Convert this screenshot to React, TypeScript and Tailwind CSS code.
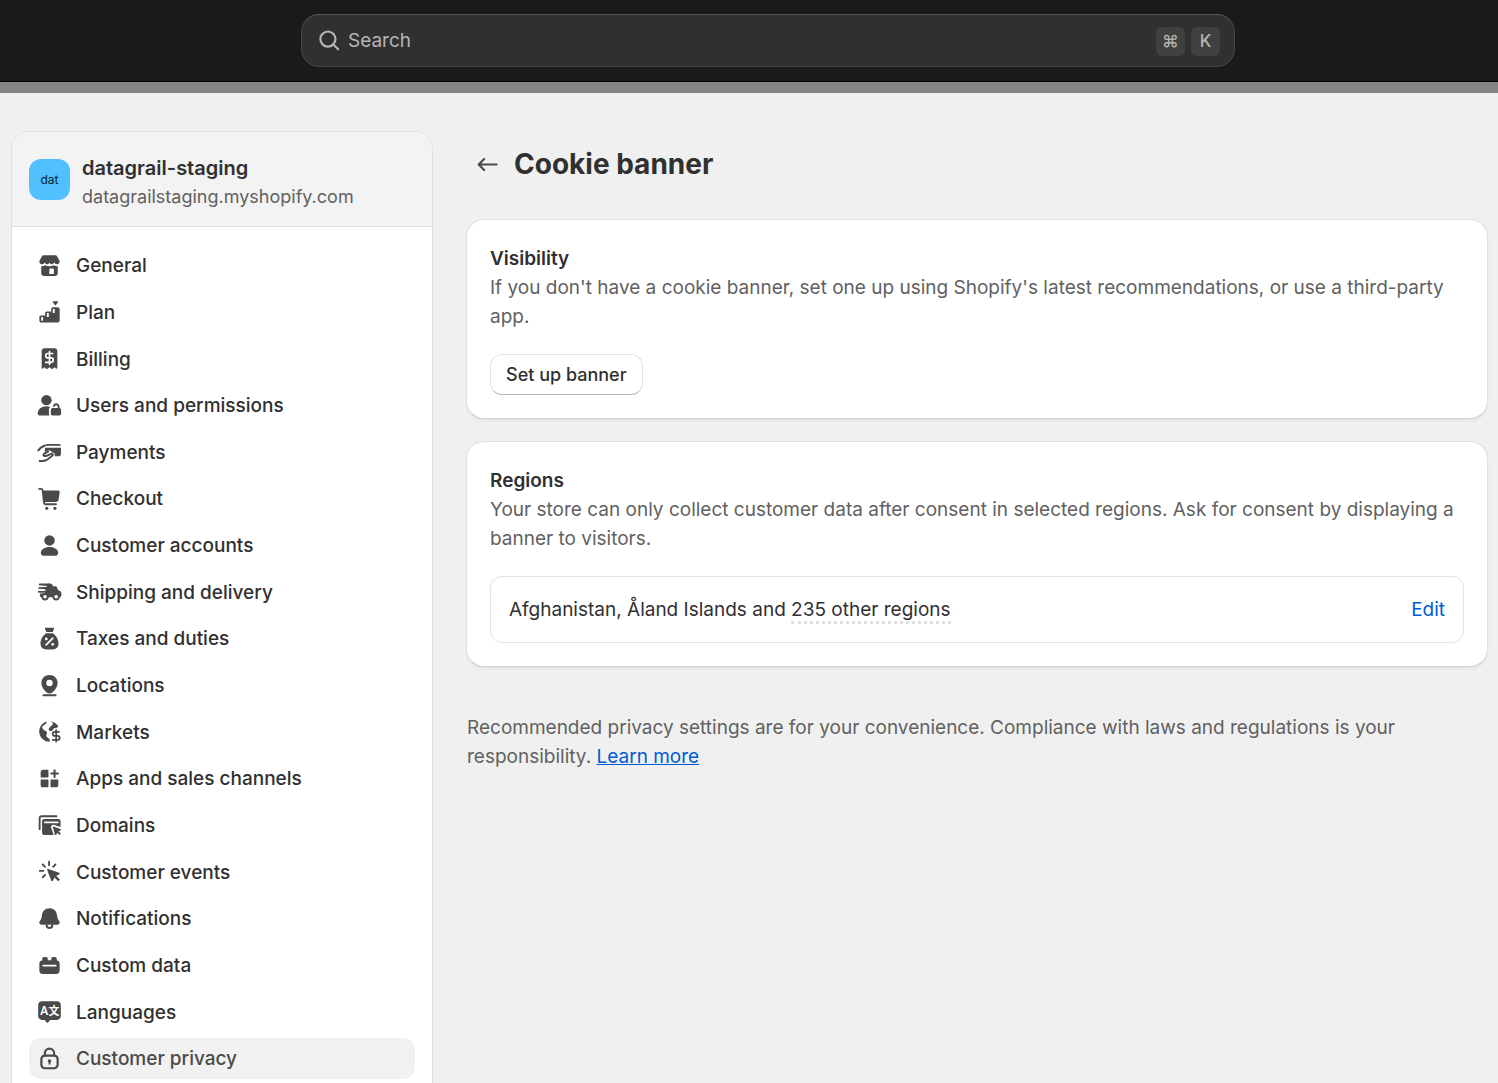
import type { ReactNode } from 'react';
import { DollarSign } from 'lucide-react';

interface NavItem {
  label: string;
  icon: ReactNode;
  active?: boolean;
}

const line = {
  fill: 'none',
  stroke: 'currentColor',
  strokeWidth: 1.5,
  strokeLinecap: 'round' as const,
  strokeLinejoin: 'round' as const,
};

function Icon({ children }: { children: ReactNode }) {
  return (
    <svg viewBox="0 0 20 20" className="size-[29px] shrink-0 text-[#4a4a4a]" fill="currentColor" aria-hidden="true">
      {children}
    </svg>
  );
}

const items: NavItem[] = [
  {
    label: 'General',
    icon: (
      <>
        <path d="M6.200 3h7.600c.7 0 1.300.3 1.600.9l1.400 2.600c.2.300.2.600.2.900 0 1-.8 1.700-1.800 1.700-.8 0-1.500-.4-2-1.200-.4.800-1 1.200-1.700 1.200s-1.200-.4-1.500-1.200c-.3.800-.9 1.200-1.600 1.200s-1.200-.4-1.600-1.200C6.300 8.700 5.600 9.100 4.800 9.100 3.800 9.100 3 8.400 3 7.400c0-.3 0-.6.2-.9l1.400-2.600C4.900 3.300 5.500 3 6.200 3z" />
        <path
          fillRule="evenodd"
          d="M4.300 10.500c1 .1 1.800-.1 2.600-.6 1.800.9 4.400.9 6.200 0 .8.500 1.600.7 2.600.6v4.900c0 1.100-.8 1.900-1.800 1.900H6.100c-1 0-1.800-.8-1.800-1.900zM10.700 12c-.5 0-.8.3-.8.8v3h3.100v-3c0-.5-.3-.8-.8-.8z"
        />
      </>
    ),
  },
  {
    label: 'Plan',
    icon: (
      <path
        fillRule="evenodd"
        d="M12.700 2.300h2.700c.4 0 .6.400.4.700l-1.300 1.800c-.2.300-.6.300-.8 0L12.300 3c-.2-.3 0-.7.400-.7zM11.200 7.500c0-.7.500-1.200 1.200-1.200h3.200c.8 0 1.400.6 1.400 1.400v7.800c0 .8-.6 1.400-1.400 1.400H4.400c-.8 0-1.400-.6-1.400-1.400v-2.300c0-.7.500-1.200 1.200-1.200H7v-1.500c0-.7.500-1.200 1.200-1.200h3zM12.300 7.500v2.900h1.300V7.500zM8.200 10.400v2.700h1.300v-2.700zM4.300 13.100v2.600h1.300v-2.600z"
      />
    ),
  },
  {
    label: 'Billing',
    icon: (
      <>
        <path d="M6.500 3h7c1.100 0 1.900.8 1.900 1.900v11.500c0 .6-.5.8-.9.500l-1-.9-1.200 1.100c-.3.300-.6.300-.9 0L10 16l-1.400 1.100c-.3.300-.6.300-.9 0L6.500 16l-1 .9c-.4.300-.9.100-.9-.5V4.900C4.600 3.800 5.400 3 6.500 3z" />
        <DollarSign x={4.8} y={4.4} width={10.4} height={10.4} stroke="white" strokeWidth={2.7} />
      </>
    ),
  },
  {
    label: 'Users and permissions',
    icon: (
      <>
        <circle cx="7.900" cy="6.300" r="3.600" />
        <path d="M1.900 15.500c0-2.800 2.600-4.900 6-4.900.9 0 1.800.2 2.600.5-.6.400-.9 1-.9 1.800v2.500c0 .6.100 1.100.4 1.500H3.500c-1 0-1.600-.5-1.600-1.400z" />
        <path d="M16.300 12v-1.300a1.700 1.700 0 0 0-3.300-.4" {...line} strokeWidth={1.300} />
        <rect x="10.900" y="11.800" width="7.100" height="5.100" rx="1.300" />
      </>
    ),
  },
  {
    label: 'Payments',
    icon: (
      <>
        <path d="M2.300 8.600C3.500 7 5 5.900 6.800 5.200" {...line} strokeWidth={1.400} />
        <path d="M3.200 15.900h2.300c3 0 4.300-2.200 6.400-3.700 1-.7.200-1.500-.8-1.200-1.700.6-2.800 1.700-4.600 1.400-1.600-.3-.4-2.100 2.500-2.900" {...line} strokeWidth={1.300} />
        <path d="M8.300 4.200h8.200c.8 0 1.400.5 1.400 1.200H6.900c.1-.7.700-1.200 1.400-1.200zM6.900 6.800h11v4.300c0 .8-.6 1.400-1.400 1.400h-2.900c.5-1.500-.7-2.700-2.200-2.400.2-.9-.5-1.500-1.500-1.500-1.200 0-2.300.5-3.200 1.100z" />
      </>
    ),
  },
  {
    label: 'Checkout',
    icon: (
      <>
        <path d="M2.900 3.400h1.200c.7 0 1.100.4 1.200 1.100l.9 8.300c.1.800.6 1.200 1.300 1.200h7" {...line} strokeWidth={1.300} />
        <path d="M5 4.500h11c.7 0 1.100.5 1 1.200l-.7 5c-.1 1-.9 1.700-1.900 1.700H6z" />
        <circle cx="8.100" cy="16.800" r="1.100" />
        <circle cx="13.700" cy="16.800" r="1.100" />
      </>
    ),
  },
  {
    label: 'Customer accounts',
    icon: (
      <>
        <circle cx="10" cy="6.500" r="3.600" />
        <path d="M4 15.200c0-2.400 2.700-4.100 6-4.100s6 1.700 6 4.100c0 1-.7 1.800-1.800 1.800H5.800c-1.100 0-1.800-.8-1.800-1.800z" />
      </>
    ),
  },
  {
    label: 'Shipping and delivery',
    icon: (
      <>
        <path d="M3.300 5.200h7M3 7.700h4M2.700 10.200h3.500" {...line} strokeWidth={1.300} />
        <path d="M8.400 4.600h2.300c.9 0 1.600.7 1.600 1.600v.2h1.500c.7 0 1.200.3 1.400.9l.8 1.800 1 .4c.8.300 1.200.9 1.200 1.700v1.200c0 .9-.7 1.600-1.600 1.600H4.900c-.9 0-1.600-.6-1.600-1.500V12c0-.4.200-.6.600-.6h2.700z" />
        <path d="M5 5.200h6v6H7z" />
        <path d="M3.500 6.450h4.500M3.300 8.950h4" stroke="white" strokeWidth=".9" />
        <circle cx="6.900" cy="13.600" r="1.900" fill="white" stroke="currentColor" strokeWidth="1.300" />
        <circle cx="14.600" cy="13.600" r="1.900" fill="white" stroke="currentColor" strokeWidth="1.300" />
      </>
    ),
  },
  {
    label: 'Taxes and duties',
    icon: (
      <>
        <path d="M7.500 2.500h5c.5 0 .8.400.6.900l-.9 2.100H7.800l-.9-2.100c-.2-.5.1-.9.6-.9zM7.800 6.400h4.400c2.300 1.400 4 4.300 4 7 0 2.500-1.600 4.100-4.100 4.100H7.900c-2.500 0-4.100-1.600-4.100-4.100 0-2.700 1.700-5.600 4-7z" />
        <path d="M12.300 9.800l-4.600 4.600" {...line} stroke="white" strokeWidth={1.200} />
        <circle cx="7.800" cy="10.300" r=".95" fill="white" />
        <circle cx="12.200" cy="14" r=".95" fill="white" />
      </>
    ),
  },
  {
    label: 'Locations',
    icon: (
      <>
        <path
          fillRule="evenodd"
          d="M10 2.700c3.200 0 5.600 2.300 5.600 5.400 0 3.100-2 5.200-3.700 6.800-1 .9-2.800.9-3.800 0-1.700-1.600-3.700-3.700-3.700-6.800 0-3.100 2.400-5.400 5.600-5.400zM10 6a2.200 2.200 0 1 0 0 4.400A2.200 2.200 0 0 0 10 6z"
        />
        <path d="M5.800 16.700h8.400" {...line} strokeWidth={1.300} />
      </>
    ),
  },
  {
    label: 'Markets',
    icon: (
      <>
        <path d="M10 2.900c2.600 0 4.900 1.500 6.100 3.600l-1.600 1.300c-.8-.3-1.500-.1-1.900.6-.5.900-1.100 1.400-2.100 1.200-1.100-.2-1.500-1.300-.7-2.100.9-.9 2.100-1.500 2.500-2.600.2-.7-.6-1.500-2.300-2zM8.400 3.100C5.200 3.800 2.900 6.600 2.900 10c0 3.900 3.200 7.100 7.100 7.100.5-.9.200-1.700-.4-2.300-.9-.9-2-.9-1.800-2.200.2-1.100.9-1.600.2-2.500C7.300 9.200 6.400 9.500 5.800 8.600 5.300 7.800 5 7.400 4.700 7.200 5.600 5.600 7.500 5.200 8.400 3.100z" />
        <DollarSign x={9.8} y={8.2} width={9.6} height={9.6} strokeWidth={3.1} />
      </>
    ),
  },
  {
    label: 'Apps and sales channels',
    icon: (
      <>
        <path d="M5.600 3.900h3c.4 0 .7.300.7.700v4c0 .4-.3.700-.7.700h-4c-.4 0-.7-.3-.7-.7v-3c0-1 .7-1.700 1.700-1.700zM4.600 10.700h4c.4 0 .7.300.7.700v4c0 .4-.3.700-.7.700h-3c-1 0-1.700-.7-1.700-1.700v-3c0-.4.3-.7.7-.7zM11.400 10.700h4c.4 0 .7.300.7.700v3c0 1-.7 1.700-1.700 1.700h-3c-.4 0-.7-.3-.7-.7v-4c0-.4.300-.7.7-.7z" />
        <path d="M13.500 4.300v4.600M11.200 6.600h4.600" {...line} strokeWidth={1.400} />
      </>
    ),
  },
  {
    label: 'Domains',
    icon: (
      <>
        <path d="M3.200 12.500V4.900c0-.8.500-1.300 1.300-1.300h10.300" {...line} strokeWidth={1.300} />
        <path
          fillRule="evenodd"
          d="M6.300 5.600h9.900c.8 0 1.400.6 1.400 1.400v4.100l-4.200-1.500c-1.500-.5-2.800.7-2.200 2.200l1.700 4.700H6.300c-.8 0-1.400-.6-1.400-1.400V7c0-.8.600-1.400 1.400-1.400zM6.300 7.200v1.300h9.900V7.200z"
        />
        <path d="M12.400 11.500c-.2-.5.200-.9.700-.7l4.400 1.600c.5.200.5.800.1 1l-1.300.6 1.500 1.500-1 1-1.500-1.500-.6 1.300c-.2.400-.8.400-1-.1z" />
      </>
    ),
  },
  {
    label: 'Customer events',
    icon: (
      <>
        <path d="M8.400 9c-.2-.5.300-1 .8-.8l7.400 2.600c.6.200.6 1 0 1.300l-2 .9 2.600 2.600-1.200 1.200-2.600-2.600-.9 2c-.3.600-1.100.6-1.300 0z" />
        <path d="M9.700 3.300v2.400M5.300 5.200l1.600 1.600M14.100 5.200l-1.600 1.600M3.300 9.600h2.500M5.300 14l1.600-1.600" {...line} strokeWidth={1.300} />
      </>
    ),
  },
  {
    label: 'Notifications',
    icon: (
      <>
        <path d="M10 2.900c3 0 5 2.100 5.200 4.900.2 2 .7 2.900 1.500 4 .8 1.300.2 2.500-1.200 2.500h-11c-1.400 0-2-1.200-1.200-2.500.8-1.100 1.300-2 1.500-4C5 5 7 2.900 10 2.900z" />
        <path d="M8.100 14.700a1.900 1.900 0 0 0 3.800 0" {...line} strokeWidth={1.400} />
      </>
    ),
  },
  {
    label: 'Custom data',
    icon: (
      <path
        fillRule="evenodd"
        d="M5 5.500c0-.8.500-1.300 1.300-1.300h1.200c.8 0 1.300.5 1.300 1.300v.8h2.400v-.8c0-.8.500-1.300 1.300-1.300h1.200c.8 0 1.300.5 1.300 1.300v.9c1.200.2 2 1.100 2 2.300v4.700c0 1.500-.9 2.400-2.400 2.400H5.400C3.900 15.800 3 14.900 3 13.400V8.700c0-1.200.8-2.100 2-2.300zM5.700 9.400a.65.65 0 0 0 0 1.300h8.600a.65.65 0 0 0 0-1.300z"
      />
    ),
  },
  {
    label: 'Languages',
    icon: (
      <>
        <path d="M4.900 2.900h10.200c1.600 0 2.700 1.100 2.700 2.700v7.500c0 1.600-1.100 2.700-2.700 2.700h-4.700l-1.200 1.600c-.4.500-1 .5-1.300 0l-1.100-1.600H4.900c-1.600 0-2.700-1.100-2.700-2.700V5.600c0-1.600 1.100-2.700 2.700-2.700z" />
        <text x="3.500" y="12.300" fill="white" fontSize="8" fontWeight="600" fontFamily="Inter, sans-serif">A</text>
        <text x="9.300" y="12.400" fill="white" fontSize="7.500" fontWeight="700" fontFamily="'Noto Sans CJK SC', sans-serif">文</text>
      </>
    ),
  },
  {
    label: 'Customer privacy',
    active: true,
    icon: (
      <>
        <rect x="4.400" y="8" width="11.200" height="8.700" rx="2.400" {...line} />
        <path d="M6.800 7.800V6.400a3.200 3.200 0 0 1 6.400 0v1.400" {...line} />
        <circle cx="10" cy="11.700" r="1.200" />
        <path d="M10 12v1.700" {...line} strokeWidth={1.200} />
      </>
    ),
  },
];

function TopBar() {
  return (
    <header className="flex justify-center border-b border-black bg-[#1a1a1a] py-3.5 pr-6 pl-[62px]">
      <label className="flex h-[53px] w-full max-w-[934px] items-center rounded-[18px] border border-[#444] border-t-[#555] bg-[#303030] pr-3.5 pl-[13px] text-[#b5b5b5]">
        <svg viewBox="0 0 20 20" className="size-[29px] shrink-0" {...line} aria-hidden="true">
          <circle cx="8.900" cy="9" r="5.200" />
          <path d="M12.800 12.900l3.200 3.200" />
        </svg>
        <input
          type="search"
          aria-label="Search"
          placeholder="Search"
          className="ml-1 min-w-0 flex-1 bg-transparent pt-0.5 text-[19px] outline-none placeholder:text-[#b5b5b5]"
        />
        <span className="flex gap-1.5 pt-0.5">
          <kbd className="grid size-[29px] place-items-center rounded-md bg-[#404040] font-[Inter,sans-serif] text-[17px] font-medium">⌘</kbd>
          <kbd className="grid size-[29px] place-items-center rounded-md bg-[#404040] font-[Inter,sans-serif] text-[17px] font-medium">K</kbd>
        </span>
      </label>
    </header>
  );
}

function Sidebar() {
  return (
    <aside className="mt-[38px] flex w-[422px] shrink-0 flex-col rounded-t-[18px] border border-b-0 border-[#dfdfdf] bg-white">
      <div className="flex items-start gap-3 rounded-t-[17px] border-b border-[#dfdfdf] bg-[#f3f3f3] px-[17px] pt-[22px] pb-[15px]">
        <div className="mt-[5px] grid size-[41px] place-items-center rounded-xl bg-[#51c0ff] text-xs text-[#00202f]">dat</div>
        <div>
          <p className="text-xl leading-[29px] font-semibold">datagrail-staging</p>
          <p className="text-lg leading-7 text-[#616161]">datagrailstaging.myshopify.com</p>
        </div>
      </div>
      <nav aria-label="Settings" className="flex flex-1 flex-col px-[17px] pt-[18px] pb-1">
        <ul className="flex flex-1 flex-col justify-between">
          {items.map(item => (
            <li key={item.label}>
              <a
                href="#"
                aria-current={item.active ? 'page' : undefined}
                className={
                  'flex h-[41px] items-center gap-3 rounded-xl px-1.5 text-[19px] font-medium ' +
                  (item.active ? 'bg-[#f1f1f1] text-[#4a4a4a]' : 'text-[#303030] hover:bg-[#f7f7f7]')
                }
              >
                <Icon>{item.icon}</Icon>
                <span className="pt-0.5">{item.label}</span>
              </a>
            </li>
          ))}
        </ul>
      </nav>
    </aside>
  );
}

function Card({ title, text, children }: { title: string; text: string; children: ReactNode }) {
  return (
    <section className="rounded-[18px] border border-[#e0e0e0] border-b-[#cfcfcf] bg-white px-[23px] pt-6 pb-[23px] shadow-[0_2px_3px_rgba(0,0,0,0.05)]">
      <h2 className="font-semibold">{title}</h2>
      <p className="mb-[23px] text-[#616161]">{text}</p>
      {children}
    </section>
  );
}

export default function App() {
  return (
    <div className="flex min-h-screen flex-col bg-[#f0f0f0] font-[Inter,sans-serif] text-[#303030]">
      <TopBar />
      <div className="h-[11px] bg-[#858585]" />
      <div className="flex flex-1 gap-[33px] pr-2.5 pl-[11px]">
        <Sidebar />
        <main className="min-w-0 flex-1 pt-[54px] text-[19px] leading-[29px]">
          <div className="mb-[37px] flex items-center gap-3 pl-[7px]">
            <button type="button" aria-label="Back" className="text-[#4a4a4a]">
              <svg viewBox="0 0 20 20" className="size-[29px]" {...line} aria-hidden="true">
                <path d="M16.300 10H4.300M7.700 6.200L3.900 10l3.800 3.800" />
              </svg>
            </button>
            <h1 className="text-[28px] leading-[35px] font-bold">Cookie banner</h1>
          </div>

          <div className="flex flex-col gap-[22px]">
            <Card
              title="Visibility"
              text="If you don't have a cookie banner, set one up using Shopify's latest recommendations, or use a third-party app."
            >
              <button
                type="button"
                className="block h-[41px] rounded-xl border border-[#e3e3e3] border-b-[#b5b5b5] bg-white px-[15px] text-lg font-medium hover:bg-[#fafafa]"
              >
                Set up banner
              </button>
            </Card>
            <Card
              title="Regions"
              text="Your store can only collect customer data after consent in selected regions. Ask for consent by displaying a banner to visitors."
            >
              <div className="flex items-center justify-between rounded-xl border border-[#e3e3e3] px-[18px] py-[18px]">
                <p>
                  Afghanistan, Åland Islands and{' '}
                  <span className="border-b-3 border-dotted border-[#e0e0e0]">235 other regions</span>
                </p>
                <button type="button" className="text-[#005bd3]">Edit</button>
              </div>
            </Card>
          </div>

          <p className="mt-[46px] pl-px text-[#616161]">
            Recommended privacy settings are for your convenience. Compliance with laws and regulations is your responsibility.{' '}
            <a href="#" className="text-[#005bd3] underline">Learn more</a>
          </p>
        </main>
      </div>
    </div>
  );
}
